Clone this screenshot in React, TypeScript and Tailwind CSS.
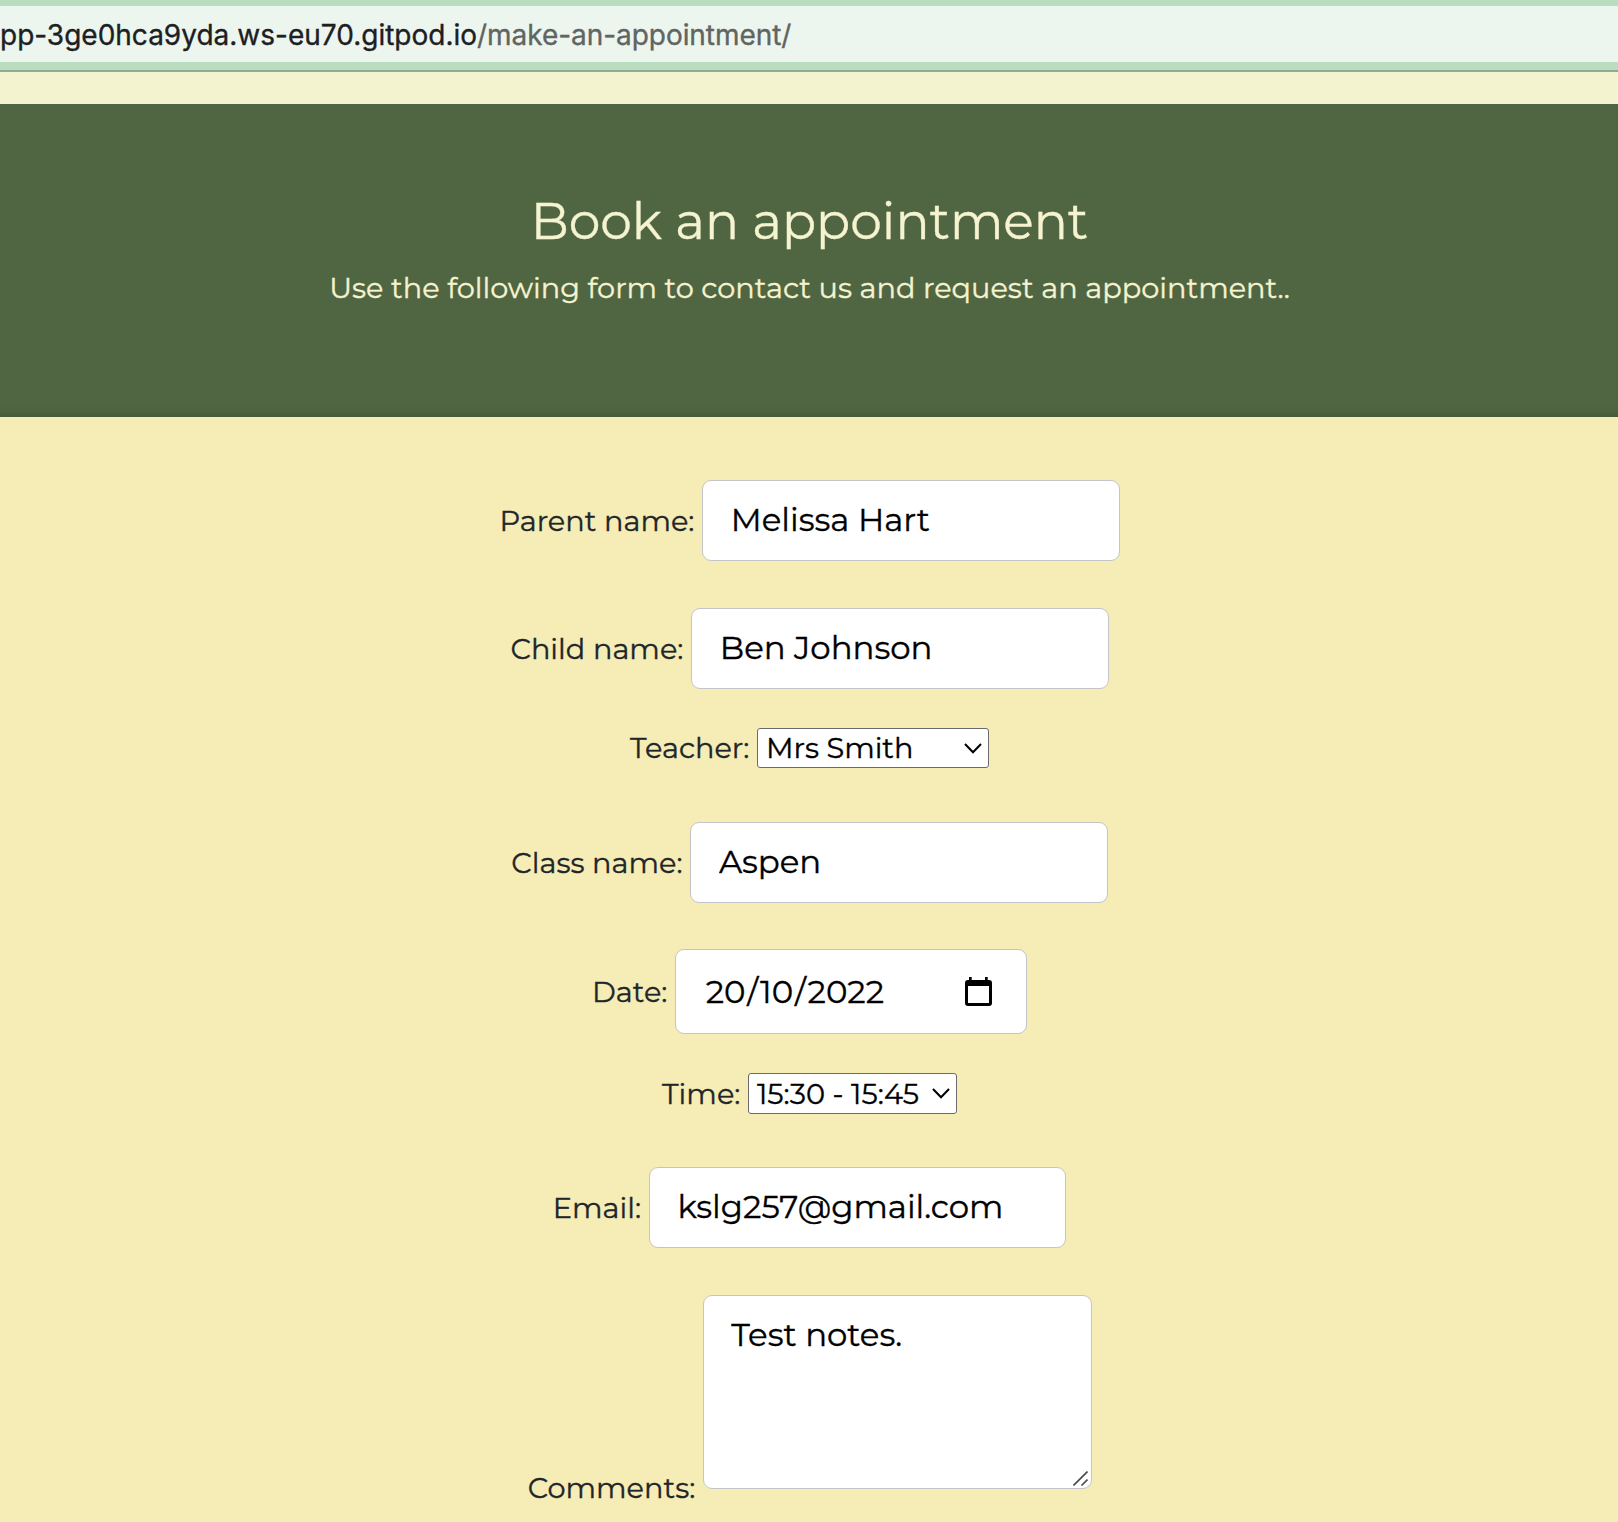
import type { ReactNode } from "react";

function Row({ label, className, children }: { label: string; className: string; children: ReactNode }) {
  return (
    <div className={`flex items-center justify-center gap-[7.5px] pl-[1px] ${className}`}>
      <label className="whitespace-nowrap text-[28.8px] leading-[42px] text-[#212529]">{label}</label>
      {children}
    </div>
  );
}

function TextInput({ value }: { value: string }) {
  return (
    <input
      readOnly
      value={value}
      className="h-[81px] w-[417.6px] rounded-[9px] border border-[#c4c4c8] bg-white px-[27.8px] pb-[2px] text-[32.4px] leading-[48px] text-black outline-none"
    />
  );
}

function Select({ value, className }: { value: string; className: string }) {
  return (
    <div
      className={`flex items-center justify-between rounded-[3px] border border-[#6b6b6f] bg-white pr-[6px] pl-[8px] text-[28.8px] leading-[36px] text-black ${className}`}
    >
      <span className="whitespace-nowrap">{value}</span>
      <svg width="18" height="11" viewBox="0 0 18 11" fill="none" stroke="#000" strokeWidth="2">
        <path d="M1 1 9 9.2 17 1" />
      </svg>
    </div>
  );
}

export default function App() {
  return (
    <div className="flex h-[1522px] w-[1618px] flex-col overflow-hidden bg-[#f6edb6] font-['Montserrat','Inter',sans-serif] [-webkit-text-stroke-width:0.35px]">
      <div className="h-[72px] border-b-2 border-[#8fab95] bg-[#b9ddbf] pt-[6px]">
        <div className="flex h-[56px] items-center overflow-hidden bg-[#edf6ee] pt-[1px] font-['Inter',sans-serif] text-[28px] leading-[40px] whitespace-nowrap">
          <span className="text-[#1d2023]">pp-3ge0hca9yda.ws-eu70.gitpod.io</span>
          <span className="tracking-[-0.05px] text-[#5f6562]">/make-an-appointment/</span>
        </div>
      </div>
      <div className="h-[32px] shrink-0 bg-[#f4f3d0]" />
      <header className="flex h-[313px] shrink-0 flex-col items-center bg-[#506642] pt-[87px] pl-[1px] text-[#f5f3d0] shadow-[inset_0_-13px_12px_-12px_rgba(0,0,0,0.22)]">
        <h1 className="text-[50.4px] leading-[60px]">Book an appointment</h1>
        <p className="mt-[15px] text-[28.8px] leading-[43px]">
          Use the following form to contact us and request an appointment..
        </p>
      </header>
      <form className="flex flex-col pt-[63px]">
        <Row label="Parent name:" className="h-[81px]">
          <TextInput value="Melissa Hart" />
        </Row>
        <Row label="Child name:" className="mt-[47px] h-[81px]">
          <TextInput value="Ben Johnson" />
        </Row>
        <Row label="Teacher:" className="mt-[39px] h-[40px]">
          <Select value="Mrs Smith" className="h-[40px] w-[232px]" />
        </Row>
        <Row label="Class name:" className="mt-[54px] h-[81px]">
          <TextInput value="Aspen" />
        </Row>
        <Row label="Date:" className="mt-[46px] h-[85px]">
          <div className="flex h-[85px] w-[352px] items-center justify-between rounded-[9px] border border-[#c4c4c8] bg-white pr-[34px] pl-[28px] text-[32.4px] leading-[48px] text-black">
            <span className="flex whitespace-nowrap">
              <span className="px-[1.8px]">20</span>
              <span>/</span>
              <span className="px-[1.8px]">10</span>
              <span>/</span>
              <span className="px-[1.8px]">2022</span>
            </span>
            <svg width="27" height="29" viewBox="0 0 27 29">
              <path
                fill="#000"
                fillRule="evenodd"
                d="M4 0h2.700v3H20V0h2.700v3h1.300A3 3 0 0 1 27 6v20a3 3 0 0 1-3 3H3a3 3 0 0 1-3-3V6A3 3 0 0 1 3 3h1ZM3 9v17h21V9Z"
              />
            </svg>
          </div>
        </Row>
        <Row label="Time:" className="mt-[39px] h-[41px]">
          <Select value="15:30 - 15:45" className="h-[41px] w-[209px]" />
        </Row>
        <Row label="Email:" className="mt-[53px] h-[81px]">
          <TextInput value="kslg257@gmail.com" />
        </Row>
        <div className="mt-[47px] flex h-[214px] items-start justify-center gap-[8px] pl-[2px]">
          <label className="self-end text-[28.8px] leading-[43px] text-[#212529]">Comments:</label>
          <div className="relative h-[194px] w-[389px] rounded-[9px] border border-[#c4c4c8] bg-white px-[27px] pt-[15px] text-[32.4px] leading-[48px] text-black">
            Test notes.
            <svg
              className="absolute right-[3px] bottom-[2px]"
              width="15"
              height="15"
              viewBox="0 0 15 15"
              stroke="#4a4a4a"
              strokeWidth="1.6"
            >
              <path d="M.5 14.500 14.500.5M8.500 14.500l6-6" />
            </svg>
          </div>
        </div>
      </form>
    </div>
  );
}
